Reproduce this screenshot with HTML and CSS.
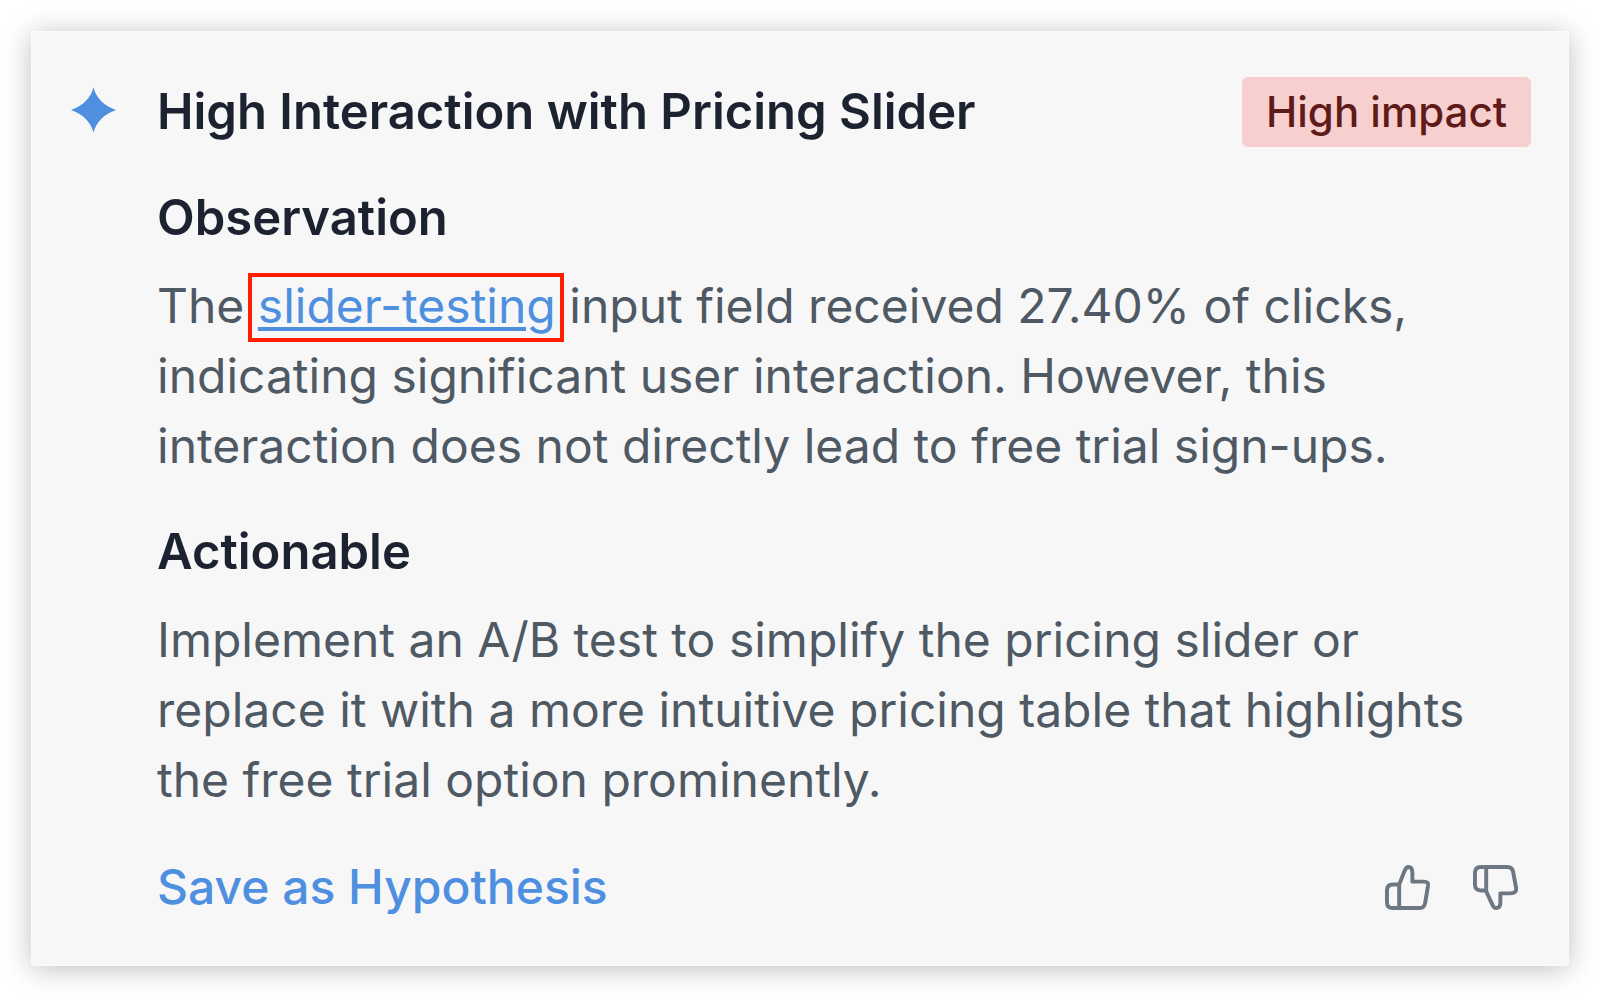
FILE: index.html
```html
<!DOCTYPE html>
<html lang="en">
<head>
  <meta charset="UTF-8">
  <meta name="viewport" content="width=device-width, initial-scale=1.0">
  <title>High Interaction with Pricing Slider</title>
  <link rel="stylesheet" href="styles.css">
</head>
<body>
  <article class="card">
    <!-- Sparkle icon -->
    <svg class="sparkle" viewBox="0 0 46 46" aria-hidden="true">
      <path d="M23 0C26 11 34 19 46 23C34 27 26 35 23 46C20 35 12 27 0 23C12 19 20 11 23 0Z" fill="#4f8fdf"/>
    </svg>

    <div class="content">
      <!-- Title and badge -->
      <header class="card-header">
        <h2>High Interaction with Pricing Slider</h2>
        <span class="badge">High impact</span>
      </header>

      <section>
        <h3>Observation</h3>
        <p>The <a href="#" class="element-link">slider-testing</a> input field received 27.40% of clicks, indicating significant user interaction. However, this interaction does not directly lead to free trial sign-ups.</p>
      </section>

      <section>
        <h3>Actionable</h3>
        <p>Implement an A/B test to simplify the pricing slider or replace it with a more intuitive pricing table that highlights the free trial option prominently.</p>
      </section>

      <!-- Actions -->
      <footer class="card-footer">
        <button type="button" class="save-btn">Save as Hypothesis</button>
        <div class="votes">
          <button type="button" class="vote-btn" aria-label="Thumbs up">
            <svg viewBox="0 0 46 46">
              <path d="M14.500 43V20L20 6Q21.500 2 24 2Q28 2 28 8V17H40Q44.500 17 44 21L41 39Q40 44 36 44H8Q2 44 2 38V26Q2 20 8 20H14.500"/>
            </svg>
          </button>
          <button type="button" class="vote-btn" aria-label="Thumbs down">
            <svg viewBox="0 0 46 46">
              <path d="M13.500 2V27L20 41Q21.500 44 23.500 44Q28 44 28 38V29H38Q45 29 44 23L41 7Q40 2 35 2H8Q2 2 2 8V20Q2 26 8 26H13.500"/>
            </svg>
          </button>
        </div>
      </footer>
    </div>
  </article>
</body>
</html>
```
FILE: styles.css
```css
* {
  box-sizing: border-box;
}
body {
  margin: 0;
  padding: 31px;
  background: #ffffff;
  font-family: Inter, sans-serif;
  font-size: 48px;
  line-height: 70px;
  color: #4e5964;
}
.card {
  display: flex;
  align-items: flex-start;
  gap: 41px;
  padding: 45px 37px 43px 39px;
  background: #f7f7f7;
  border: 1px solid #fafafa;
  border-radius: 2px;
  box-shadow: 0 3px 28px rgba(0, 0, 0, 0.25);
}
.sparkle {
  flex: none;
  width: 45px;
  height: 46px;
  margin-top: 10px;
}
.content {
  flex: 1;
  display: flex;
  flex-direction: column;
  gap: 36px;
}
.card-header, .card-footer {
  display: flex;
  justify-content: space-between;
  align-items: center;
}
.card-footer {
  padding-top: 1px;
}
h2, h3, p {
  margin: 0;
}
h2, h3 {
  font-size: 49px;
  font-weight: 600;
  color: #1d2230;
}
h3 {
  margin-bottom: 18px;
}
.badge {
  padding: 0 24px;
  background: #f8cfcf;
  border-radius: 6px;
  font-size: 42px;
  font-weight: 500;
  color: #5f1a1a;
}
.element-link {
  position: relative;
  color: #4f8fdf;
  text-decoration-thickness: 4px;
  text-underline-offset: 4px;
}
/* red frame around the linked element */
.element-link::after {
  content: "";
  position: absolute;
  inset: -3px -8px -7px -10px;
  border: 4px solid #ff1e00;
}
.save-btn, .vote-btn {
  padding: 0;
  background: none;
  border: none;
  cursor: pointer;
}
.save-btn {
  font: inherit;
  font-weight: 500;
  color: #4f8fdf;
}
.votes {
  display: flex;
  gap: 43px;
  padding-right: 13px;
}
.vote-btn {
  width: 45px;
  height: 45px;
}
.vote-btn svg {
  display: block;
  fill: none;
  stroke: #6c7782;
  stroke-width: 4;
  stroke-linejoin: round;
}
```
